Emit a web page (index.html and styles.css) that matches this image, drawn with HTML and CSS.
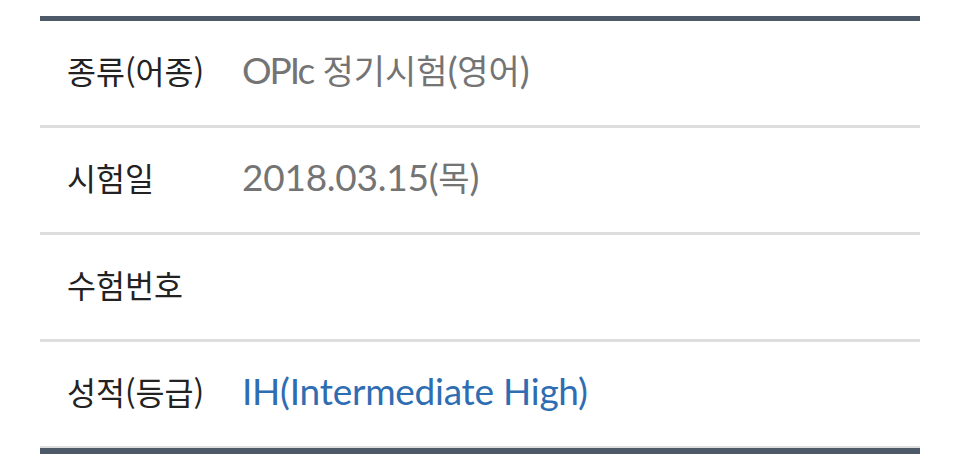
FILE: index.html
```html
<!DOCTYPE html>
<html lang="ko">
<head>
<meta charset="utf-8">
<link rel="stylesheet" href="styles.css">
</head>
<body>
<div class="info">
  <div class="row"><div class="label">종류(어종)</div><div class="value"><span class="tight">OPIc</span> <span class="ko">정기시험</span>(<span class="ko">영어</span>)</div></div>
  <div class="row"><div class="label">시험일</div><div class="value">2018.03.15(<span class="ko">목</span>)</div></div>
  <div class="row"><div class="label">수험번호</div><div class="value"></div></div>
  <div class="row last"><div class="label">성적(등급)</div><div class="value grade">IH(Intermediate High)</div></div>
</div>
</body>
</html>
```
FILE: styles.css
```css
html, body { margin: 0; padding: 0; background: #fff; }
body { font-family: "Noto Sans CJK KR", "Noto Sans", sans-serif; }
.info {
  margin: 16px 40px 0 40px;
  border-top: 5px solid #4e5a68;
  border-bottom: 6px solid #4e5a68;
}
.row {
  display: flex;
  align-items: center;
  height: 98px;
  padding-bottom: 6px;
  border-bottom: 3px solid #dedede;
  padding-left: 27px;
}
.row.last { border-bottom-width: 2px; }
.label {
  width: 175px;
  font-size: 31.5px;
  color: #222;
}
.value {
  font-family: "Lato", "Noto Sans CJK KR", sans-serif;
  font-size: 37px;
  color: #747474;
  line-height: 1.2;
  letter-spacing: -0.25px;
}
.tight { letter-spacing: -2px; }
.ko {
  font-family: "Noto Sans CJK KR", sans-serif;
  font-size: 34px;
  letter-spacing: 0;
}
.grade { color: #2f6db3; }
```
